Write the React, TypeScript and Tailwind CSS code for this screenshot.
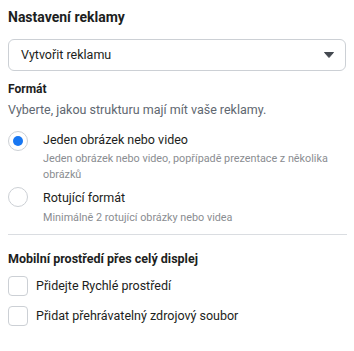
import React from "react";

export default function App() {
  return (
    <div
      className="w-[354px] h-[351px] bg-white px-2 pt-[7px] text-[#1c1e21]"
      style={{ fontFamily: "Roboto, 'Liberation Sans', sans-serif" }}
    >
      <div className="text-[14px] leading-5 font-bold">Nastavení reklamy</div>

      <div className="mt-3 h-8 flex items-center justify-between rounded-md border border-[#ccd0d5] pl-3 pr-[10px]">
        <span className="text-[12.5px] leading-5">Vytvořit reklamu</span>
        <svg width="10" height="6" viewBox="0 0 10 6" className="mr-[1px]">
          <path d="M0.5 0.5 H9.5 L5 5.5 Z" fill="#444950" stroke="#444950" strokeLinejoin="round" />
        </svg>
      </div>

      <div className="mt-[10px] text-[12px] leading-4 font-bold">Formát</div>
      <div className="mt-[3px] text-[12.5px] leading-5 text-[#606770]">
        Vyberte, jakou strukturu mají mít vaše reklamy.
      </div>

      <div className="mt-[10px] flex gap-[15px]">
        <div className="mt-[1px] w-5 h-5 shrink-0 rounded-full border border-[#ccd0d5] flex items-center justify-center">
          <div className="w-[10px] h-[10px] rounded-full bg-[#1877f2]" />
        </div>
        <div>
          <div className="text-[12.5px] leading-5">Jeden obrázek nebo video</div>
          <div className="mt-[1px] text-[10.8px] leading-4 text-[#8a8d91]">
            Jeden obrázek nebo video, popřípadě prezentace z několika obrázků
          </div>
        </div>
      </div>

      <div className="mt-[5px] flex gap-[15px]">
        <div className="-mt-[1px] w-5 h-5 shrink-0 rounded-full border border-[#ccd0d5]" />
        <div>
          <div className="text-[12.5px] leading-5">Rotující formát</div>
          <div className="mt-[2px] text-[10.8px] leading-4 text-[#8a8d91]">
            Minimálně 2 rotující obrázky nebo videa
          </div>
        </div>
      </div>

      <div className="mt-2 h-px bg-[#dadde1] mr-[-1px]" />

      <div className="mt-[14px] text-[12.5px] leading-5 font-bold">
        Mobilní prostředí přes celý displej
      </div>

      <div className="mt-[7px] flex items-center gap-2">
        <div className="w-5 h-5 shrink-0 rounded-[4px] border border-[#ccd0d5]" />
        <span className="text-[12.5px] leading-5">Přidejte Rychlé prostředí</span>
      </div>
      <div className="mt-[10px] flex items-center gap-2">
        <div className="w-5 h-5 shrink-0 rounded-[4px] border border-[#ccd0d5]" />
        <span className="text-[12.5px] leading-5">Přidat přehrávatelný zdrojový soubor</span>
      </div>
    </div>
  );
}
